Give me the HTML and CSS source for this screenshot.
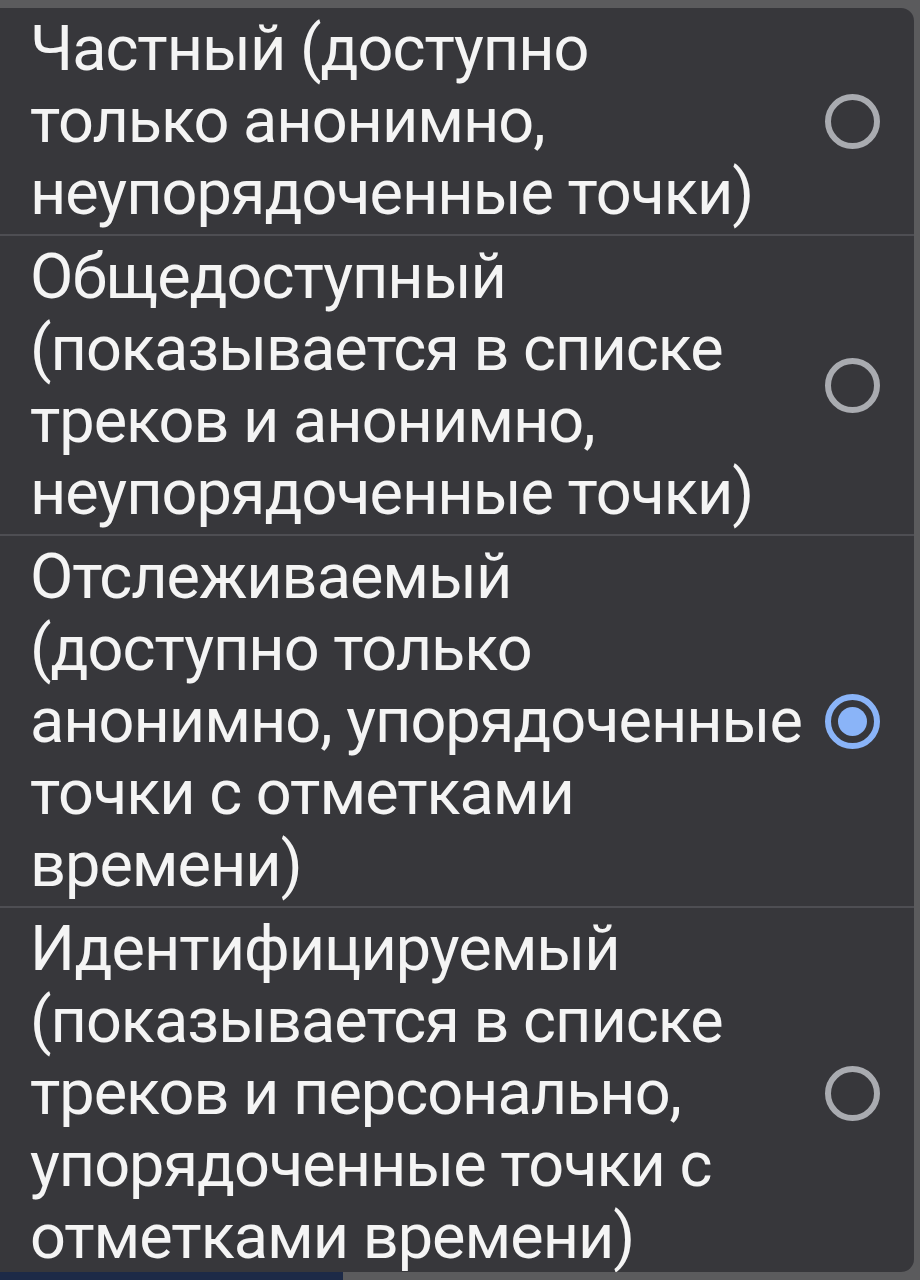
FILE: index.html
```html
<!doctype html>
<html lang="ru">
<head>
<meta charset="utf-8">
<title>Видимость трека</title>
<meta name="viewport" content="width=device-width,initial-scale=1">
<link rel="stylesheet" href="styles.css">
</head>
<body>
<div class="sheet">
  <ul class="options">
    <li class="option">
      <span class="label">Частный (доступно<br>только анонимно,<br>неупорядоченные точки)</span>
      <span class="radio"></span>
    </li>
    <li class="option">
      <span class="label">Общедоступный<br>(показывается в списке<br>треков и анонимно,<br>неупорядоченные точки)</span>
      <span class="radio"></span>
    </li>
    <li class="option">
      <span class="label">Отслеживаемый<br>(доступно только<br>анонимно, упорядоченные<br>точки с отметками<br>времени)</span>
      <span class="radio checked"></span>
    </li>
    <li class="option">
      <span class="label">Идентифицируемый<br>(показывается в списке<br>треков и персонально,<br>упорядоченные точки с<br>отметками времени)</span>
      <span class="radio"></span>
    </li>
  </ul>
</div>
<div class="under"><div class="under-tab"></div></div>
</body>
</html>
```

FILE: styles.css
```css
:root{
  --bg:#5b5b5d;--sheet:#37373b;--line:#4e4e53;--text:#f4f4f4;
  --radio:#a9abb0;--accent:#8ab4f8
}
*{box-sizing:border-box;margin:0;padding:0}
body{background:var(--bg);font-family:Roboto,"Noto Sans",Arial,sans-serif;color:var(--text);height:1280px;overflow:hidden}
.sheet{background:var(--sheet);margin:8px 6px 0 0;border-radius:0 13px 13px 0;height:1264px;overflow:hidden}
.options{list-style:none}
.option{display:flex;align-items:center;padding:5px 0 5px 30px;border-bottom:2px solid var(--line)}
.option:last-child{border-bottom:none}
.label{flex:1;font-size:63px;letter-spacing:-1px;line-height:72px;white-space:nowrap}
.radio{width:55px;height:55px;border-radius:50%;border:6px solid var(--radio);margin:0 34px 0 auto;flex:none;position:relative}
.radio.checked{border-color:var(--accent)}
.radio.checked::after{content:"";position:absolute;inset:7px;border-radius:50%;background:var(--accent)}
.under{height:8px;background:var(--bg)}
.under-tab{width:343px;height:100%;background:#1d2a47}
```
